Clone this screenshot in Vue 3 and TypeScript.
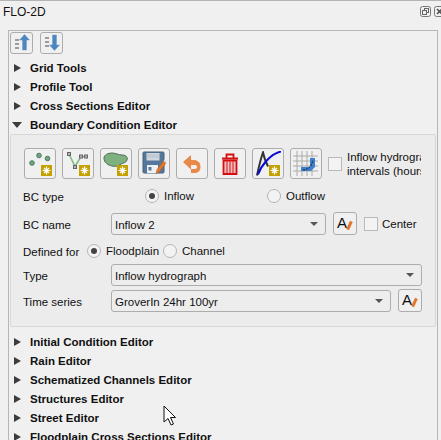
<template>
  <div class="page">
    <header class="title-bar">
      <span class="title">FLO-2D</span>
      <div class="dock-btns">
        <svg width="11" height="11" viewBox="0 0 11 11" class="dock">
          <rect x="0.5" y="0.5" width="10" height="10" rx="2" fill="none" stroke="#777" />
          <rect x="4.5" y="2.500" width="4" height="4" fill="none" stroke="#666" />
          <rect x="2.5" y="4.500" width="4" height="4" fill="#f0f0f0" stroke="#666" />
        </svg>
        <svg width="11" height="11" viewBox="0 0 11 11" class="dock">
          <rect x="0.5" y="0.5" width="10" height="10" rx="2" fill="none" stroke="#777" />
          <path d="M3 3l5 5M8 3l-5 5" stroke="#555" stroke-width="1.6" />
        </svg>
      </div>
    </header>

    <main class="panel">
      <div class="top-tools">
        <button class="tool-small">
          <svg width="18" height="18" viewBox="0 0 18 18">
            <path d="M2 5h4v2H2zM2 9h4v2H2zM2 13h4v2H2z" fill="#9c9c9c" />
            <path d="M9.500 16V6H6.500l5-5.500 5 5.500h-3v10z" fill="#4a86c0" stroke="#6d9ac4" stroke-width="0.5" />
          </svg>
        </button>
        <button class="tool-small">
          <svg width="18" height="18" viewBox="0 0 18 18">
            <path d="M2 3h4v2H2zM2 7h4v2H2zM2 11h4v2H2z" fill="#9c9c9c" />
            <path d="M9.500 1v10H6.500l5 5.500 5-5.500h-3V1z" fill="#4a86c0" stroke="#6d9ac4" stroke-width="0.5" />
          </svg>
        </button>
      </div>

      <div v-for="name in topSections" :key="name" class="section">
        <span class="arrow-right"></span>
        <span class="section-name">{{ name }}</span>
      </div>
      <div class="section">
        <span class="arrow-down"></span>
        <span class="section-name">Boundary Condition Editor</span>
      </div>

      <section class="group">
        <div class="icon-row">
          <button class="tool">
            <svg width="26" height="26" viewBox="0 0 26 26">
              <g fill="#6fa67f" stroke="#4f7a5f">
                <circle cx="5" cy="12" r="2.300" />
                <circle cx="12" cy="4.500" r="2.300" />
                <circle cx="20.500" cy="7.500" r="2.300" />
              </g>
              <rect x="14" y="14" width="11" height="11" fill="#c4a000" />
              <path d="M19.500 15.500v8M15.500 19.500h8M17 17l5 5M22 17l-5 5" stroke="#fff" stroke-width="1.200" />
            </svg>
          </button>
          <button class="tool">
            <svg width="26" height="26" viewBox="0 0 26 26">
              <path d="M4 3l6 12.500 6-10h5" fill="none" stroke="#83bb83" stroke-width="1.600" />
              <path d="M16 5.500h5" stroke="#888" />
              <g fill="#b5b5b5" stroke="#666">
                <rect x="2.500" y="1.500" width="3" height="3" />
                <rect x="8.500" y="14.500" width="3" height="3" />
                <rect x="14.500" y="4" width="3" height="3" />
                <rect x="19.500" y="4" width="3" height="3" />
              </g>
              <rect x="14" y="14" width="11" height="11" fill="#c4a000" />
              <path d="M19.500 15.500v8M15.500 19.500h8M17 17l5 5M22 17l-5 5" stroke="#fff" stroke-width="1.200" />
            </svg>
          </button>
          <button class="tool">
            <svg width="26" height="26" viewBox="0 0 26 26">
              <path d="M1 7c0-3 4-5 8-5 4 0 6 2 10 2 4 0 6 2 5 5-1 3-4 3-6 4-3 2-5 3-9 2C5 14 1 12 1 7z" fill="#7fb07f" stroke="#4f6f55" />
              <rect x="14" y="14" width="11" height="11" fill="#c4a000" />
              <path d="M19.500 15.500v8M15.500 19.500h8M17 17l5 5M22 17l-5 5" stroke="#fff" stroke-width="1.200" />
            </svg>
          </button>
          <button class="tool">
            <svg width="26" height="26" viewBox="0 0 26 26">
              <rect x="2" y="1" width="21" height="21" rx="1" fill="#55779a" stroke="#47637f" />
              <rect x="5.500" y="2" width="13" height="7.500" fill="#cfd6de" />
              <path d="M5.500 4h13M5.500 6h13" stroke="#aab5c0" stroke-width="0.700" />
              <rect x="6" y="14" width="11" height="8" fill="#eef1f4" />
              <rect x="7.500" y="16" width="3" height="3.500" fill="#55779a" />
              <path d="M15 23l1-4.500 6.500-8.500 2.500 2-6.500 8.500z" fill="#e2762a" stroke="#b8561a" stroke-width="0.500" />
              <path d="M22.500 10l2.500 2 1-1.500-2.500-2z" fill="#ddd" />
            </svg>
          </button>
          <button class="tool">
            <svg width="26" height="26" viewBox="0 0 26 26">
              <path d="M12 4L4 11l8 7.500V14h4c1.500 0 2 1 2 2 0 1.500-1 2-3 2h-3v4h4c3.500 0 5.500-3 5.500-6 0-5-3.500-7-6.500-7h-3z" fill="#e8894a" />
            </svg>
          </button>
          <button class="tool">
            <svg width="26" height="26" viewBox="0 0 26 26">
              <path d="M5 7.500h16M9.500 7V3.500h7V7" fill="none" stroke="#d30f0f" stroke-width="1.800" />
              <path d="M6.500 9.500h13v13.500h-13z" fill="#f7bcbc" stroke="#d30f0f" stroke-width="1.800" />
              <path d="M10 10v12M13 10v12M16 10v12" stroke="#d94040" stroke-width="1.300" />
            </svg>
          </button>
          <button class="tool">
            <svg width="26" height="26" viewBox="0 0 26 26">
              <path d="M2 24.500C4 15 6 7 8 1.500c1 5 3 10 5 14" fill="none" stroke="#333" stroke-width="2" />
              <path d="M3 23.500C6 15 15 3 26 .5" fill="none" stroke="#0a0ad8" stroke-width="2" />
              <rect x="14" y="14" width="11" height="11" fill="#c4a000" />
              <path d="M19.500 15.500v8M15.500 19.500h8M17 17l5 5M22 17l-5 5" stroke="#fff" stroke-width="1.200" />
            </svg>
          </button>
          <button class="tool">
            <svg width="26" height="26" viewBox="0 0 26 26">
              <path d="M0 5h25M0 10h25M0 15h25M0 20h25M4 0v25M9 0v25M14 0v25M19 0v25" stroke="#aaa" stroke-width="1" />
              <path d="M8 16h9V7h5v9l-4 4H8z" fill="#3d7fd0" />
              <path d="M10 19c5 0 9-4 10-10" fill="none" stroke="#222" stroke-dasharray="2 1" />
            </svg>
          </button>
          <label class="check intervals">
            <span class="box"></span>
            <span class="clip">Inflow hydrograph<br />intervals (hours)</span>
          </label>
        </div>

        <div class="row type-row">
          <span class="label">BC type</span>
          <label class="radio inflow"><span class="dot on"></span>Inflow</label>
          <label class="radio outflow"><span class="dot"></span>Outflow</label>
        </div>

        <div class="row name-row">
          <span class="label wide">BC name</span>
          <div class="combo bc-combo">Inflow 2<span class="caret"></span></div>
          <button class="font-btn">
            <span class="a">A</span><span class="pen"></span>
          </button>
          <label class="check center"><span class="box"></span>Center</label>
        </div>

        <div class="row defined-row">
          <span class="label">Defined for</span>
          <label class="radio flood"><span class="dot on"></span>Floodplain</label>
          <label class="radio"><span class="dot"></span>Channel</label>
        </div>

        <div class="row type2-row">
          <span class="label wide">Type</span>
          <div class="combo grow">Inflow hydrograph<span class="caret"></span></div>
        </div>

        <div class="row series-row">
          <span class="label wide">Time series</span>
          <div class="combo grow">GroverIn 24hr 100yr<span class="caret"></span></div>
          <button class="font-btn">
            <span class="a">A</span><span class="pen"></span>
          </button>
        </div>
      </section>

      <div class="lower">
        <div v-for="name in bottomSections" :key="name" class="section">
          <span class="arrow-right"></span>
          <span class="section-name">{{ name }}</span>
        </div>
      </div>
    </main>

    <svg class="cursor" width="13" height="22" viewBox="0 0 13 22">
      <path d="M1 1v16l4-3.500 3 6.500 2.500-1-3-6.500h5z" fill="#fff" stroke="#111" />
    </svg>
  </div>
</template>

<script setup lang="ts">
const topSections: string[] = ['Grid Tools', 'Profile Tool', 'Cross Sections Editor']
const bottomSections: string[] = [
  'Initial Condition Editor',
  'Rain Editor',
  'Schematized Channels Editor',
  'Structures Editor',
  'Street Editor',
  'Floodplain Cross Sections Editor',
]
</script>

<style>
body {
  margin: 0;
}
</style>

<style scoped>
.page {
  position: relative;
  width: 441px;
  height: 440px;
  box-sizing: border-box;
  overflow: hidden;
  background: #f0f0f0;
  border-top: 1px solid #b4b4b4;
  font-family: "Liberation Sans", Arial, sans-serif;
  font-size: 11.5px;
  color: #111;
}

.title-bar {
  display: flex;
  align-items: center;
  justify-content: space-between;
  height: 21px;
  padding: 0 0 0 3px;
}

.title {
  font-size: 12px;
}

.dock-btns {
  display: flex;
  gap: 3px;
  margin-right: -4px;
}

.panel {
  box-sizing: border-box;
  height: 420px;
  width: 430px;
  margin: 8px 0 0 8px;
  border: 1px solid #b6b6b6;
  border-width: 1px 1px 0 1px;
}

.top-tools {
  display: flex;
  gap: 7px;
  padding: 1px 0 0 1px;
  height: 27px;
  box-sizing: border-box;
}

.tool-small {
  width: 23px;
  height: 22px;
  padding: 0;
  display: flex;
  align-items: center;
  justify-content: center;
  background: #f0f0f0;
  border: 1px solid #adadad;
  border-radius: 3px;
}

.section {
  display: flex;
  align-items: center;
  height: 19px;
}

.section-name {
  font-weight: bold;
  font-size: 11.5px;
  margin-left: 8px;
}

.arrow-right {
  width: 0;
  height: 0;
  margin-left: 5px;
  margin-right: 1px;
  border-left: 7px solid #3c3c3c;
  border-top: 4.500px solid transparent;
  border-bottom: 4.500px solid transparent;
}

.arrow-down {
  width: 0;
  height: 0;
  margin-left: 3px;
  margin-right: 0;
  border-top: 6px solid #3c3c3c;
  border-left: 5px solid transparent;
  border-right: 5px solid transparent;
}

.group {
  box-sizing: border-box;
  width: 426px;
  height: 193px;
  margin: 0 0 0 1px;
  padding: 13px 13px 0 12px;
  background: #ececec;
  border: 1px solid #d8d8d8;
  border-radius: 2px;
}

.icon-row {
  display: flex;
  align-items: center;
  gap: 6px;
  height: 31px;
  margin-left: 1px;
}

.tool {
  width: 32px;
  height: 31px;
  flex: none;
  padding: 0;
  display: flex;
  align-items: center;
  justify-content: center;
  background: #f0f0f0;
  border: 1px solid #adadad;
  border-radius: 3px;
}

.check {
  display: flex;
  align-items: center;
  gap: 5px;
}

.box {
  flex: none;
  width: 12px;
  height: 12px;
  background: #f3f3f3;
  border: 1px solid #b9b9b9;
}

.intervals {
  width: 93px;
  line-height: 14px;
  overflow: hidden;
}

.clip {
  white-space: nowrap;
}

.row {
  display: flex;
  align-items: center;
}

.type-row {
  margin-top: 6px;
  height: 22px;
}

.name-row {
  margin-top: 5px;
  height: 23px;
}

.defined-row {
  margin-top: 4px;
  height: 23px;
}

.type2-row {
  margin-top: 2px;
  height: 22px;
}

.series-row {
  margin-top: 3px;
  height: 23px;
}

.label {
  flex: none;
  width: 64px;
  padding-top: 2px;
}

.label.wide {
  width: 88px;
}

.radio {
  display: flex;
  align-items: center;
  gap: 5px;
}

.inflow {
  margin-left: 58px;
  width: 122px;
}

.flood {
  width: 76px;
}

.dot {
  position: relative;
  box-sizing: border-box;
  flex: none;
  width: 14px;
  height: 14px;
  border: 1px solid #b5b5b5;
  border-radius: 50%;
  background: #f3f3f3;
}

.dot.on::after {
  content: "";
  position: absolute;
  left: 3px;
  top: 3px;
  width: 6px;
  height: 6px;
  border-radius: 50%;
  background: #444;
}

.combo {
  position: relative;
  box-sizing: border-box;
  height: 22px;
  line-height: 20px;
  padding: 1px 0 0 3px;
  background: #ededed;
  border: 1px solid #adadad;
  border-radius: 3px;
}

.bc-combo {
  flex: none;
  width: 215px;
}

.grow {
  flex: 1;
}

.caret {
  position: absolute;
  right: 7px;
  top: 8px;
  width: 0;
  height: 0;
  border-top: 4px solid #555;
  border-left: 4px solid transparent;
  border-right: 4px solid transparent;
}

.font-btn {
  position: relative;
  flex: none;
  box-sizing: border-box;
  width: 24px;
  height: 23px;
  margin-left: 7px;
  padding: 0;
  background: #f0f0f0;
  border: 1px solid #adadad;
  border-radius: 3px;
}

.a {
  position: absolute;
  left: 3px;
  top: 1px;
  font-size: 15px;
  line-height: 17px;
  color: #111;
}

.pen {
  position: absolute;
  left: 14px;
  top: 8px;
  width: 3px;
  height: 9px;
  background: #e2762a;
  transform: rotate(25deg);
}

.center {
  margin-left: 7px;
  gap: 4px;
}

.lower {
  margin-top: 5px;
}

.cursor {
  position: absolute;
  left: 163px;
  top: 404px;
}
</style>
